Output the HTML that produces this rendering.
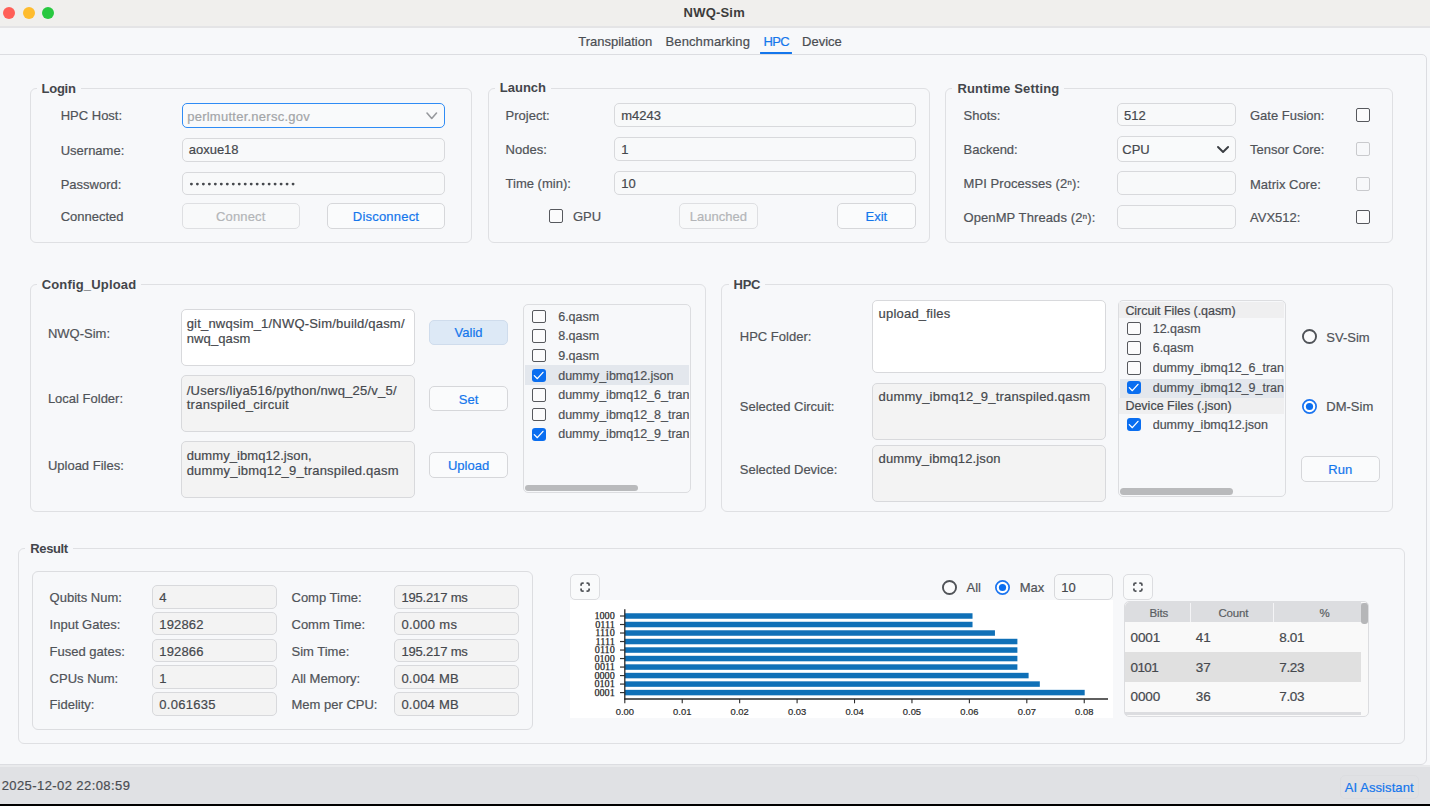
<!DOCTYPE html>
<html><head><meta charset="utf-8"><title>NWQ-Sim</title>
<style>
html,body{margin:0;padding:0;width:1430px;height:806px;overflow:hidden;background:#f7f8fa;font-family:'Liberation Sans', sans-serif;}
body{position:relative;}
</style></head><body>
<div style="position:absolute;left:0px;top:0px;width:1430px;height:26px;background:#f0efed;border-radius:0px;"></div>
<div style="position:absolute;left:0px;top:26px;width:1430px;height:2px;background:#e4e4e6;border-radius:0px;"></div>
<div style="position:absolute;left:0px;top:28px;width:1430px;height:26px;background:#f7f8fa;border-radius:0px;"></div>
<div style="position:absolute;left:2.9000000000000004px;top:6.9px;width:12px;height:12px;border-radius:50%;background:#ff5f57"></div>
<div style="position:absolute;left:22.7px;top:6.9px;width:12px;height:12px;border-radius:50%;background:#febc2e"></div>
<div style="position:absolute;left:42.3px;top:6.9px;width:12px;height:12px;border-radius:50%;background:#28c840"></div>
<div style="position:absolute;left:683.60px;top:5.20px;line-height:15px;font-size:13px;font-weight:bold;color:#3c3c3c;white-space:pre;font-family:'Liberation Sans', sans-serif;letter-spacing:0.194px;">NWQ-Sim</div>
<div style="position:absolute;left:578.20px;top:34.30px;line-height:15px;font-size:13px;font-weight:normal;color:#4a4d52;white-space:pre;font-family:'Liberation Sans', sans-serif;letter-spacing:0.004px;-webkit-text-stroke:0.2px #4a4d52;">Transpilation</div>
<div style="position:absolute;left:665.50px;top:34.30px;line-height:15px;font-size:13px;font-weight:normal;color:#4a4d52;white-space:pre;font-family:'Liberation Sans', sans-serif;letter-spacing:0.117px;-webkit-text-stroke:0.2px #4a4d52;">Benchmarking</div>
<div style="position:absolute;left:763.50px;top:34.30px;line-height:15px;font-size:13px;font-weight:normal;color:#1476ec;white-space:pre;font-family:'Liberation Sans', sans-serif;letter-spacing:-0.649px;-webkit-text-stroke:0.2px #1476ec;">HPC</div>
<div style="position:absolute;left:802.00px;top:34.30px;line-height:15px;font-size:13px;font-weight:normal;color:#4a4d52;white-space:pre;font-family:'Liberation Sans', sans-serif;letter-spacing:0.011px;-webkit-text-stroke:0.2px #4a4d52;">Device</div>
<div style="position:absolute;left:760px;top:52px;width:32.39999999999998px;height:2.299999999999997px;background:#1476ec;border-radius:1.2px;"></div>
<div style="position:absolute;left:-10px;top:54px;width:1437px;height:711px;box-sizing:border-box;border:1px solid #dcdde1;border-radius:0 5px 6px 0;background:#f7f8fa"></div>
<div style="position:absolute;left:760px;top:52px;width:32.39999999999998px;height:2.299999999999997px;background:#1476ec;border-radius:1.2px;"></div>
<div style="position:absolute;left:0px;top:765px;width:1430px;height:2px;background:#e9eaec;border-radius:0px;"></div>
<div style="position:absolute;left:0px;top:767px;width:1430px;height:36.5px;background:#e0e1e4;border-radius:0px;"></div>
<div style="position:absolute;left:0px;top:803.5px;width:1430px;height:2.5px;background:#000;border-radius:0px;"></div>
<div style="position:absolute;left:1.70px;top:777.90px;line-height:15px;font-size:13px;font-weight:normal;color:#4a4d52;white-space:pre;font-family:'Liberation Sans', sans-serif;letter-spacing:0.415px;-webkit-text-stroke:0.2px #4a4d52;">2025-12-02 22:08:59</div>
<div style="position:absolute;left:1340px;top:775px;width:79px;height:24px;box-sizing:border-box;background:transparent;border:1px solid #d9dadd;border-radius:5px;opacity:.6"></div>
<div style="position:absolute;left:1344.70px;top:779.80px;line-height:15px;font-size:13px;font-weight:normal;color:#1476ec;white-space:pre;font-family:'Liberation Sans', sans-serif;letter-spacing:0.089px;-webkit-text-stroke:0.2px #1476ec;">AI Assistant</div>
<div style="position:absolute;left:30px;top:88px;width:442px;height:155px;box-sizing:border-box;background:transparent;border:1px solid #dfe0e3;border-radius:6px;"></div>
<div style="position:absolute;left:41.60px;top:81.00px;line-height:15px;font-size:13px;font-weight:bold;color:#43464b;white-space:pre;font-family:'Liberation Sans', sans-serif;letter-spacing:-0.275px;background:#f7f8fa;padding:0 5px;margin-left:-5px;">Login</div>
<div style="position:absolute;left:60.70px;top:108.40px;line-height:15px;font-size:13px;font-weight:normal;color:#505358;white-space:pre;font-family:'Liberation Sans', sans-serif;letter-spacing:0.000px;-webkit-text-stroke:0.2px #505358;">HPC Host:</div>
<div style="position:absolute;left:60.70px;top:143.00px;line-height:15px;font-size:13px;font-weight:normal;color:#505358;white-space:pre;font-family:'Liberation Sans', sans-serif;letter-spacing:0.000px;-webkit-text-stroke:0.2px #505358;">Username:</div>
<div style="position:absolute;left:60.70px;top:176.70px;line-height:15px;font-size:13px;font-weight:normal;color:#505358;white-space:pre;font-family:'Liberation Sans', sans-serif;letter-spacing:0.000px;-webkit-text-stroke:0.2px #505358;">Password:</div>
<div style="position:absolute;left:60.70px;top:209.00px;line-height:15px;font-size:13px;font-weight:normal;color:#505358;white-space:pre;font-family:'Liberation Sans', sans-serif;letter-spacing:0.000px;-webkit-text-stroke:0.2px #505358;">Connected</div>
<div style="position:absolute;left:181.6px;top:102.5px;width:263.6px;height:25.7px;box-sizing:border-box;background:#f9fafb;border:1.8px solid #2f8cf5;border-radius:5px"></div>
<div style="position:absolute;left:187.20px;top:109.00px;line-height:15px;font-size:13px;font-weight:normal;color:#a3a5a8;white-space:pre;font-family:'Liberation Sans', sans-serif;letter-spacing:0.251px;-webkit-text-stroke:0.2px #a3a5a8;">perlmutter.nersc.gov</div>
<svg style="position:absolute;left:425.4px;top:110.8px" width="13.5" height="9.5"><path d="M2 2 L6.75 7.5 L11.5 2" fill="none" stroke="#97999d" stroke-width="1.6" stroke-linecap="round" stroke-linejoin="round"/></svg>
<div style="position:absolute;left:182px;top:138px;width:263px;height:24px;box-sizing:border-box;background:#f8f9fa;border:1px solid #d8d9dc;border-radius:5px;"></div>
<div style="position:absolute;left:188.70px;top:142.40px;line-height:15px;font-size:13px;font-weight:normal;color:#45484d;white-space:pre;font-family:'Liberation Sans', sans-serif;letter-spacing:0.000px;-webkit-text-stroke:0.2px #45484d;">aoxue18</div>
<div style="position:absolute;left:182px;top:172px;width:263px;height:23px;box-sizing:border-box;background:#f8f9fa;border:1px solid #d8d9dc;border-radius:5px;"></div>
<svg style="position:absolute;left:0;top:0" width="1430" height="806"><circle cx="191.40" cy="184.1" r="1.45" fill="#46494e"/><circle cx="197.38" cy="184.1" r="1.45" fill="#46494e"/><circle cx="203.36" cy="184.1" r="1.45" fill="#46494e"/><circle cx="209.34" cy="184.1" r="1.45" fill="#46494e"/><circle cx="215.32" cy="184.1" r="1.45" fill="#46494e"/><circle cx="221.30" cy="184.1" r="1.45" fill="#46494e"/><circle cx="227.28" cy="184.1" r="1.45" fill="#46494e"/><circle cx="233.26" cy="184.1" r="1.45" fill="#46494e"/><circle cx="239.24" cy="184.1" r="1.45" fill="#46494e"/><circle cx="245.22" cy="184.1" r="1.45" fill="#46494e"/><circle cx="251.20" cy="184.1" r="1.45" fill="#46494e"/><circle cx="257.18" cy="184.1" r="1.45" fill="#46494e"/><circle cx="263.16" cy="184.1" r="1.45" fill="#46494e"/><circle cx="269.14" cy="184.1" r="1.45" fill="#46494e"/><circle cx="275.12" cy="184.1" r="1.45" fill="#46494e"/><circle cx="281.10" cy="184.1" r="1.45" fill="#46494e"/><circle cx="287.08" cy="184.1" r="1.45" fill="#46494e"/><circle cx="293.06" cy="184.1" r="1.45" fill="#46494e"/></svg>
<div style="position:absolute;left:182px;top:203px;width:118px;height:26px;box-sizing:border-box;background:#f8f9fa;border:1px solid #dedfe2;border-radius:5px;"></div>
<div style="position:absolute;left:216.10px;top:209.00px;line-height:15px;font-size:13px;font-weight:normal;color:#b3b5b8;white-space:pre;font-family:'Liberation Sans', sans-serif;letter-spacing:0.126px;-webkit-text-stroke:0.2px #b3b5b8;">Connect</div>
<div style="position:absolute;left:327px;top:203px;width:118px;height:26px;box-sizing:border-box;background:#fafbfc;border:1px solid #d6d7da;border-radius:5px;"></div>
<div style="position:absolute;left:352.80px;top:209.00px;line-height:15px;font-size:13px;font-weight:normal;color:#1476ec;white-space:pre;font-family:'Liberation Sans', sans-serif;letter-spacing:0.209px;-webkit-text-stroke:0.2px #1476ec;">Disconnect</div>
<div style="position:absolute;left:488px;top:88px;width:442px;height:155px;box-sizing:border-box;background:transparent;border:1px solid #dfe0e3;border-radius:6px;"></div>
<div style="position:absolute;left:499.80px;top:80.40px;line-height:15px;font-size:13px;font-weight:bold;color:#43464b;white-space:pre;font-family:'Liberation Sans', sans-serif;letter-spacing:0.000px;background:#f7f8fa;padding:0 5px;margin-left:-5px;">Launch</div>
<div style="position:absolute;left:505.60px;top:108.00px;line-height:15px;font-size:13px;font-weight:normal;color:#505358;white-space:pre;font-family:'Liberation Sans', sans-serif;letter-spacing:0.000px;-webkit-text-stroke:0.2px #505358;">Project:</div>
<div style="position:absolute;left:505.60px;top:142.30px;line-height:15px;font-size:13px;font-weight:normal;color:#505358;white-space:pre;font-family:'Liberation Sans', sans-serif;letter-spacing:0.000px;-webkit-text-stroke:0.2px #505358;">Nodes:</div>
<div style="position:absolute;left:505.60px;top:176.00px;line-height:15px;font-size:13px;font-weight:normal;color:#505358;white-space:pre;font-family:'Liberation Sans', sans-serif;letter-spacing:0.000px;-webkit-text-stroke:0.2px #505358;">Time (min):</div>
<div style="position:absolute;left:614px;top:103px;width:302px;height:24px;box-sizing:border-box;background:#f8f9fa;border:1px solid #d8d9dc;border-radius:5px;"></div>
<div style="position:absolute;left:621.20px;top:107.55px;line-height:15px;font-size:13px;font-weight:normal;color:#45484d;white-space:pre;font-family:'Liberation Sans', sans-serif;letter-spacing:0.000px;-webkit-text-stroke:0.2px #45484d;">m4243</div>
<div style="position:absolute;left:614px;top:137px;width:302px;height:24px;box-sizing:border-box;background:#f8f9fa;border:1px solid #d8d9dc;border-radius:5px;"></div>
<div style="position:absolute;left:621.20px;top:141.50px;line-height:15px;font-size:13px;font-weight:normal;color:#45484d;white-space:pre;font-family:'Liberation Sans', sans-serif;letter-spacing:0.000px;-webkit-text-stroke:0.2px #45484d;">1</div>
<div style="position:absolute;left:614px;top:171px;width:302px;height:24px;box-sizing:border-box;background:#f8f9fa;border:1px solid #d8d9dc;border-radius:5px;"></div>
<div style="position:absolute;left:621.20px;top:175.85px;line-height:15px;font-size:13px;font-weight:normal;color:#45484d;white-space:pre;font-family:'Liberation Sans', sans-serif;letter-spacing:0.000px;-webkit-text-stroke:0.2px #45484d;">10</div>
<div style="position:absolute;left:549px;top:209.3px;width:13.8px;height:13.8px;box-sizing:border-box;border:1.7px solid #56585d;border-radius:2px;background:#fbfbfc"></div>
<div style="position:absolute;left:573.00px;top:209.00px;line-height:15px;font-size:13px;font-weight:normal;color:#505358;white-space:pre;font-family:'Liberation Sans', sans-serif;letter-spacing:0.000px;-webkit-text-stroke:0.2px #505358;">GPU</div>
<div style="position:absolute;left:679px;top:203px;width:79px;height:26px;box-sizing:border-box;background:#f8f9fa;border:1px solid #dedfe2;border-radius:5px;"></div>
<div style="position:absolute;left:689.85px;top:209.05px;line-height:15px;font-size:13px;font-weight:normal;color:#b3b5b8;white-space:pre;font-family:'Liberation Sans', sans-serif;letter-spacing:0.000px;-webkit-text-stroke:0.2px #b3b5b8;">Launched</div>
<div style="position:absolute;left:837px;top:203px;width:79px;height:26px;box-sizing:border-box;background:#fafbfc;border:1px solid #d6d7da;border-radius:5px;"></div>
<div style="position:absolute;left:865.56px;top:209.05px;line-height:15px;font-size:13px;font-weight:normal;color:#1476ec;white-space:pre;font-family:'Liberation Sans', sans-serif;letter-spacing:0.000px;-webkit-text-stroke:0.2px #1476ec;">Exit</div>
<div style="position:absolute;left:945px;top:88px;width:448px;height:155px;box-sizing:border-box;background:transparent;border:1px solid #dfe0e3;border-radius:6px;"></div>
<div style="position:absolute;left:957.40px;top:80.80px;line-height:15px;font-size:13px;font-weight:bold;color:#43464b;white-space:pre;font-family:'Liberation Sans', sans-serif;letter-spacing:0.156px;background:#f7f8fa;padding:0 5px;margin-left:-5px;">Runtime Setting</div>
<div style="position:absolute;left:963.50px;top:107.50px;line-height:15px;font-size:13px;font-weight:normal;color:#505358;white-space:pre;font-family:'Liberation Sans', sans-serif;letter-spacing:0.000px;-webkit-text-stroke:0.2px #505358;">Shots:</div>
<div style="position:absolute;left:963.50px;top:142.30px;line-height:15px;font-size:13px;font-weight:normal;color:#505358;white-space:pre;font-family:'Liberation Sans', sans-serif;letter-spacing:0.000px;-webkit-text-stroke:0.2px #505358;">Backend:</div>
<div style="position:absolute;left:963.50px;top:176.40px;line-height:15px;font-size:13px;font-weight:normal;color:#505358;white-space:pre;font-family:'Liberation Sans', sans-serif;letter-spacing:0.075px;-webkit-text-stroke:0.2px #505358;">MPI Processes (2ⁿ):</div>
<div style="position:absolute;left:963.50px;top:210.20px;line-height:15px;font-size:13px;font-weight:normal;color:#505358;white-space:pre;font-family:'Liberation Sans', sans-serif;letter-spacing:0.097px;-webkit-text-stroke:0.2px #505358;">OpenMP Threads (2ⁿ):</div>
<div style="position:absolute;left:1117px;top:103px;width:119px;height:23px;box-sizing:border-box;background:#f8f9fa;border:1px solid #d8d9dc;border-radius:5px;"></div>
<div style="position:absolute;left:1124.00px;top:107.60px;line-height:15px;font-size:13px;font-weight:normal;color:#45484d;white-space:pre;font-family:'Liberation Sans', sans-serif;letter-spacing:0.000px;-webkit-text-stroke:0.2px #45484d;">512</div>
<div style="position:absolute;left:1117px;top:136px;width:119px;height:26px;box-sizing:border-box;background:#f9fafb;border:1px solid #d8d9dc;border-radius:5px;"></div>
<div style="position:absolute;left:1122.30px;top:141.60px;line-height:15px;font-size:13px;font-weight:normal;color:#45484d;white-space:pre;font-family:'Liberation Sans', sans-serif;letter-spacing:0.000px;-webkit-text-stroke:0.2px #45484d;">CPU</div>
<svg style="position:absolute;left:1215.7px;top:144.7px" width="14.099999999999909" height="9.0"><path d="M2 2 L7.0499999999999545 7.0 L12.099999999999909 2" fill="none" stroke="#3a3d42" stroke-width="1.9" stroke-linecap="round" stroke-linejoin="round"/></svg>
<div style="position:absolute;left:1117px;top:171px;width:119px;height:24px;box-sizing:border-box;background:#f8f9fa;border:1px solid #d8d9dc;border-radius:5px;"></div>
<div style="position:absolute;left:1117px;top:205px;width:119px;height:24px;box-sizing:border-box;background:#f8f9fa;border:1px solid #d8d9dc;border-radius:5px;"></div>
<div style="position:absolute;left:1250.00px;top:107.80px;line-height:15px;font-size:13px;font-weight:normal;color:#505358;white-space:pre;font-family:'Liberation Sans', sans-serif;letter-spacing:0.000px;-webkit-text-stroke:0.2px #505358;">Gate Fusion:</div>
<div style="position:absolute;left:1250.00px;top:142.20px;line-height:15px;font-size:13px;font-weight:normal;color:#505358;white-space:pre;font-family:'Liberation Sans', sans-serif;letter-spacing:0.000px;-webkit-text-stroke:0.2px #505358;">Tensor Core:</div>
<div style="position:absolute;left:1250.00px;top:176.60px;line-height:15px;font-size:13px;font-weight:normal;color:#505358;white-space:pre;font-family:'Liberation Sans', sans-serif;letter-spacing:0.000px;-webkit-text-stroke:0.2px #505358;">Matrix Core:</div>
<div style="position:absolute;left:1250.00px;top:210.20px;line-height:15px;font-size:13px;font-weight:normal;color:#505358;white-space:pre;font-family:'Liberation Sans', sans-serif;letter-spacing:0.000px;-webkit-text-stroke:0.2px #505358;">AVX512:</div>
<div style="position:absolute;left:1356.1px;top:108.1px;width:13.5px;height:13.5px;box-sizing:border-box;border:1.7px solid #56585d;border-radius:2px;background:#fbfbfc"></div>
<div style="position:absolute;left:1356.1px;top:142.1px;width:13.5px;height:13.5px;box-sizing:border-box;border:1.3px solid #c9cacd;border-radius:2px;background:#f7f8fa"></div>
<div style="position:absolute;left:1356.1px;top:177.3px;width:13.5px;height:13.5px;box-sizing:border-box;border:1.3px solid #c9cacd;border-radius:2px;background:#f7f8fa"></div>
<div style="position:absolute;left:1356.1px;top:210.4px;width:13.5px;height:13.5px;box-sizing:border-box;border:1.7px solid #56585d;border-radius:2px;background:#fbfbfc"></div>
<div style="position:absolute;left:30px;top:284px;width:676px;height:228px;box-sizing:border-box;background:transparent;border:1px solid #dfe0e3;border-radius:6px;"></div>
<div style="position:absolute;left:41.70px;top:277.20px;line-height:15px;font-size:13px;font-weight:bold;color:#43464b;white-space:pre;font-family:'Liberation Sans', sans-serif;letter-spacing:0.167px;background:#f7f8fa;padding:0 5px;margin-left:-5px;">Config_Upload</div>
<div style="position:absolute;left:47.90px;top:325.60px;line-height:15px;font-size:13px;font-weight:normal;color:#505358;white-space:pre;font-family:'Liberation Sans', sans-serif;letter-spacing:0.000px;-webkit-text-stroke:0.2px #505358;">NWQ-Sim:</div>
<div style="position:absolute;left:47.90px;top:391.30px;line-height:15px;font-size:13px;font-weight:normal;color:#505358;white-space:pre;font-family:'Liberation Sans', sans-serif;letter-spacing:0.000px;-webkit-text-stroke:0.2px #505358;">Local Folder:</div>
<div style="position:absolute;left:47.90px;top:458.00px;line-height:15px;font-size:13px;font-weight:normal;color:#505358;white-space:pre;font-family:'Liberation Sans', sans-serif;letter-spacing:0.000px;-webkit-text-stroke:0.2px #505358;">Upload Files:</div>
<div style="position:absolute;left:181px;top:309px;width:234px;height:57px;box-sizing:border-box;background:#ffffff;border:1px solid #d8d9dc;border-radius:5px;"></div>
<div style="position:absolute;left:181px;top:375px;width:234px;height:57px;box-sizing:border-box;background:#f3f3f3;border:1px solid #d8d9dc;border-radius:5px;"></div>
<div style="position:absolute;left:181px;top:441px;width:234px;height:57px;box-sizing:border-box;background:#f3f3f3;border:1px solid #d8d9dc;border-radius:5px;"></div>
<div style="position:absolute;left:186.70px;top:316.00px;line-height:15px;font-size:13px;font-weight:normal;color:#45484d;white-space:pre;font-family:'Liberation Sans', sans-serif;letter-spacing:0.198px;-webkit-text-stroke:0.2px #45484d;">git_nwqsim_1/NWQ-Sim/build/qasm/</div>
<div style="position:absolute;left:186.70px;top:331.20px;line-height:15px;font-size:13px;font-weight:normal;color:#45484d;white-space:pre;font-family:'Liberation Sans', sans-serif;letter-spacing:0.117px;-webkit-text-stroke:0.2px #45484d;">nwq_qasm</div>
<div style="position:absolute;left:186.70px;top:382.50px;line-height:15px;font-size:13px;font-weight:normal;color:#45484d;white-space:pre;font-family:'Liberation Sans', sans-serif;letter-spacing:0.238px;-webkit-text-stroke:0.2px #45484d;">/Users/liya516/python/nwq_25/v_5/</div>
<div style="position:absolute;left:186.70px;top:397.00px;line-height:15px;font-size:13px;font-weight:normal;color:#45484d;white-space:pre;font-family:'Liberation Sans', sans-serif;letter-spacing:0.264px;-webkit-text-stroke:0.2px #45484d;">transpiled_circuit</div>
<div style="position:absolute;left:186.70px;top:448.40px;line-height:15px;font-size:13px;font-weight:normal;color:#45484d;white-space:pre;font-family:'Liberation Sans', sans-serif;letter-spacing:0.080px;-webkit-text-stroke:0.2px #45484d;">dummy_ibmq12.json,</div>
<div style="position:absolute;left:186.70px;top:462.70px;line-height:15px;font-size:13px;font-weight:normal;color:#45484d;white-space:pre;font-family:'Liberation Sans', sans-serif;letter-spacing:0.202px;-webkit-text-stroke:0.2px #45484d;">dummy_ibmq12_9_transpiled.qasm</div>
<div style="position:absolute;left:429px;top:320px;width:79px;height:25px;box-sizing:border-box;background:#dde9f6;border:1px solid #cfdcec;border-radius:5px;"></div>
<div style="position:absolute;left:454.58px;top:325.40px;line-height:15px;font-size:13px;font-weight:normal;color:#1476ec;white-space:pre;font-family:'Liberation Sans', sans-serif;letter-spacing:0.000px;-webkit-text-stroke:0.2px #1476ec;">Valid</div>
<div style="position:absolute;left:429px;top:386px;width:79px;height:25px;box-sizing:border-box;background:#fafbfc;border:1px solid #d6d7da;border-radius:5px;"></div>
<div style="position:absolute;left:458.79px;top:391.55px;line-height:15px;font-size:13px;font-weight:normal;color:#1476ec;white-space:pre;font-family:'Liberation Sans', sans-serif;letter-spacing:0.000px;-webkit-text-stroke:0.2px #1476ec;">Set</div>
<div style="position:absolute;left:429px;top:452px;width:79px;height:26px;box-sizing:border-box;background:#fafbfc;border:1px solid #d6d7da;border-radius:5px;"></div>
<div style="position:absolute;left:447.95px;top:457.55px;line-height:15px;font-size:13px;font-weight:normal;color:#1476ec;white-space:pre;font-family:'Liberation Sans', sans-serif;letter-spacing:0.000px;-webkit-text-stroke:0.2px #1476ec;">Upload</div>
<div style="position:absolute;left:523px;top:304px;width:168px;height:189px;box-sizing:border-box;background:#f7f8fa;border:1px solid #dcdde0;border-radius:5px;"></div>
<div style="position:absolute;left:525.2px;top:365.3px;width:163.5999999999999px;height:19.599999999999966px;background:#e3e7ed;border-radius:0px;"></div>
<div style="position:absolute;left:532.2px;top:309.8px;width:13.4px;height:13.4px;box-sizing:border-box;border:1.7px solid #56585d;border-radius:2px;background:#fbfbfc"></div>
<div style="position:absolute;left:558.20px;top:309.57px;line-height:14px;font-size:12.5px;font-weight:normal;color:#4d5055;white-space:pre;font-family:'Liberation Sans', sans-serif;letter-spacing:0.000px;-webkit-text-stroke:0.2px #4d5055;width:131.30px;overflow:hidden;">6.qasm</div>
<div style="position:absolute;left:532.2px;top:329.45px;width:13.4px;height:13.4px;box-sizing:border-box;border:1.7px solid #56585d;border-radius:2px;background:#fbfbfc"></div>
<div style="position:absolute;left:558.20px;top:329.22px;line-height:14px;font-size:12.5px;font-weight:normal;color:#4d5055;white-space:pre;font-family:'Liberation Sans', sans-serif;letter-spacing:0.000px;-webkit-text-stroke:0.2px #4d5055;width:131.30px;overflow:hidden;">8.qasm</div>
<div style="position:absolute;left:532.2px;top:349.1px;width:13.4px;height:13.4px;box-sizing:border-box;border:1.7px solid #56585d;border-radius:2px;background:#fbfbfc"></div>
<div style="position:absolute;left:558.20px;top:348.87px;line-height:14px;font-size:12.5px;font-weight:normal;color:#4d5055;white-space:pre;font-family:'Liberation Sans', sans-serif;letter-spacing:0.000px;-webkit-text-stroke:0.2px #4d5055;width:131.30px;overflow:hidden;">9.qasm</div>
<div style="position:absolute;left:532.2px;top:368.75px;width:13.4px;height:13.4px;box-sizing:border-box;background:#0a6ef0;border-radius:3px;"></div>
<svg style="position:absolute;left:532.2px;top:368.75px" width="13.4" height="13.4" viewBox="0 0 14 14"><path d="M2.4 6.9 L5.6 10.1 L11.5 3.5" fill="none" stroke="#fff" stroke-width="1.4" stroke-linecap="round" stroke-linejoin="round"/></svg>
<div style="position:absolute;left:558.20px;top:368.52px;line-height:14px;font-size:12.5px;font-weight:normal;color:#4d5055;white-space:pre;font-family:'Liberation Sans', sans-serif;letter-spacing:0.000px;-webkit-text-stroke:0.2px #4d5055;width:131.30px;overflow:hidden;">dummy_ibmq12.json</div>
<div style="position:absolute;left:532.2px;top:388.40000000000003px;width:13.4px;height:13.4px;box-sizing:border-box;border:1.7px solid #56585d;border-radius:2px;background:#fbfbfc"></div>
<div style="position:absolute;left:558.20px;top:388.17px;line-height:14px;font-size:12.5px;font-weight:normal;color:#4d5055;white-space:pre;font-family:'Liberation Sans', sans-serif;letter-spacing:0.000px;-webkit-text-stroke:0.2px #4d5055;width:131.30px;overflow:hidden;">dummy_ibmq12_6_tran</div>
<div style="position:absolute;left:532.2px;top:408.05px;width:13.4px;height:13.4px;box-sizing:border-box;border:1.7px solid #56585d;border-radius:2px;background:#fbfbfc"></div>
<div style="position:absolute;left:558.20px;top:407.82px;line-height:14px;font-size:12.5px;font-weight:normal;color:#4d5055;white-space:pre;font-family:'Liberation Sans', sans-serif;letter-spacing:0.000px;-webkit-text-stroke:0.2px #4d5055;width:131.30px;overflow:hidden;">dummy_ibmq12_8_tran</div>
<div style="position:absolute;left:532.2px;top:427.7px;width:13.4px;height:13.4px;box-sizing:border-box;background:#0a6ef0;border-radius:3px;"></div>
<svg style="position:absolute;left:532.2px;top:427.7px" width="13.4" height="13.4" viewBox="0 0 14 14"><path d="M2.4 6.9 L5.6 10.1 L11.5 3.5" fill="none" stroke="#fff" stroke-width="1.4" stroke-linecap="round" stroke-linejoin="round"/></svg>
<div style="position:absolute;left:558.20px;top:427.47px;line-height:14px;font-size:12.5px;font-weight:normal;color:#4d5055;white-space:pre;font-family:'Liberation Sans', sans-serif;letter-spacing:0.000px;-webkit-text-stroke:0.2px #4d5055;width:131.30px;overflow:hidden;">dummy_ibmq12_9_tran</div>
<div style="position:absolute;left:525.2px;top:484.8px;width:112.5px;height:6.199999999999989px;background:#b9babc;border-radius:3px;"></div>
<div style="position:absolute;left:721px;top:284px;width:672px;height:228px;box-sizing:border-box;background:transparent;border:1px solid #dfe0e3;border-radius:6px;"></div>
<div style="position:absolute;left:733.60px;top:277.20px;line-height:15px;font-size:13px;font-weight:bold;color:#43464b;white-space:pre;font-family:'Liberation Sans', sans-serif;letter-spacing:-0.316px;background:#f7f8fa;padding:0 5px;margin-left:-5px;">HPC</div>
<div style="position:absolute;left:739.80px;top:329.30px;line-height:15px;font-size:13px;font-weight:normal;color:#505358;white-space:pre;font-family:'Liberation Sans', sans-serif;letter-spacing:0.000px;-webkit-text-stroke:0.2px #505358;">HPC Folder:</div>
<div style="position:absolute;left:739.80px;top:399.10px;line-height:15px;font-size:13px;font-weight:normal;color:#505358;white-space:pre;font-family:'Liberation Sans', sans-serif;letter-spacing:0.000px;-webkit-text-stroke:0.2px #505358;">Selected Circuit:</div>
<div style="position:absolute;left:739.80px;top:461.70px;line-height:15px;font-size:13px;font-weight:normal;color:#505358;white-space:pre;font-family:'Liberation Sans', sans-serif;letter-spacing:0.000px;-webkit-text-stroke:0.2px #505358;">Selected Device:</div>
<div style="position:absolute;left:872px;top:300px;width:234px;height:73px;box-sizing:border-box;background:#ffffff;border:1px solid #d8d9dc;border-radius:5px;"></div>
<div style="position:absolute;left:872px;top:383px;width:234px;height:57px;box-sizing:border-box;background:#f3f3f3;border:1px solid #d8d9dc;border-radius:5px;"></div>
<div style="position:absolute;left:872px;top:445px;width:234px;height:57px;box-sizing:border-box;background:#f3f3f3;border:1px solid #d8d9dc;border-radius:5px;"></div>
<div style="position:absolute;left:878.60px;top:306.10px;line-height:15px;font-size:13px;font-weight:normal;color:#45484d;white-space:pre;font-family:'Liberation Sans', sans-serif;letter-spacing:0.201px;-webkit-text-stroke:0.2px #45484d;">upload_files</div>
<div style="position:absolute;left:878.60px;top:389.30px;line-height:15px;font-size:13px;font-weight:normal;color:#45484d;white-space:pre;font-family:'Liberation Sans', sans-serif;letter-spacing:0.195px;-webkit-text-stroke:0.2px #45484d;">dummy_ibmq12_9_transpiled.qasm</div>
<div style="position:absolute;left:878.60px;top:451.30px;line-height:15px;font-size:13px;font-weight:normal;color:#45484d;white-space:pre;font-family:'Liberation Sans', sans-serif;letter-spacing:0.121px;-webkit-text-stroke:0.2px #45484d;">dummy_ibmq12.json</div>
<div style="position:absolute;left:1118px;top:300px;width:168px;height:197px;box-sizing:border-box;background:#f7f8fa;border:1px solid #dcdde0;border-radius:5px;"></div>
<div style="position:absolute;left:1119.4px;top:301.6px;width:164.89999999999986px;height:16.299999999999955px;background:#efeff0;border-radius:0px;"></div>
<div style="position:absolute;left:1125.40px;top:304.07px;line-height:14px;font-size:12.5px;font-weight:normal;color:#45484d;white-space:pre;font-family:'Liberation Sans', sans-serif;letter-spacing:-0.044px;-webkit-text-stroke:0.2px #45484d;">Circuit Files (.qasm)</div>
<div style="position:absolute;left:1120.3px;top:378.5px;width:163.29999999999995px;height:19.0px;background:#e3e7ed;border-radius:0px;"></div>
<div style="position:absolute;left:1119.4px;top:397.5px;width:164.89999999999986px;height:16.69999999999999px;background:#efeff0;border-radius:0px;"></div>
<div style="position:absolute;left:1125.40px;top:399.47px;line-height:14px;font-size:12.5px;font-weight:normal;color:#45484d;white-space:pre;font-family:'Liberation Sans', sans-serif;letter-spacing:0.000px;-webkit-text-stroke:0.2px #45484d;">Device Files (.json)</div>
<div style="position:absolute;left:1127.3px;top:321.8px;width:13.4px;height:13.4px;box-sizing:border-box;border:1.7px solid #56585d;border-radius:2px;background:#fbfbfc"></div>
<div style="position:absolute;left:1152.70px;top:321.57px;line-height:14px;font-size:12.5px;font-weight:normal;color:#4d5055;white-space:pre;font-family:'Liberation Sans', sans-serif;letter-spacing:0.000px;-webkit-text-stroke:0.2px #4d5055;width:131.30px;overflow:hidden;">12.qasm</div>
<div style="position:absolute;left:1127.3px;top:341.3px;width:13.4px;height:13.4px;box-sizing:border-box;border:1.7px solid #56585d;border-radius:2px;background:#fbfbfc"></div>
<div style="position:absolute;left:1152.70px;top:341.07px;line-height:14px;font-size:12.5px;font-weight:normal;color:#4d5055;white-space:pre;font-family:'Liberation Sans', sans-serif;letter-spacing:0.000px;-webkit-text-stroke:0.2px #4d5055;width:131.30px;overflow:hidden;">6.qasm</div>
<div style="position:absolute;left:1127.3px;top:361.40000000000003px;width:13.4px;height:13.4px;box-sizing:border-box;border:1.7px solid #56585d;border-radius:2px;background:#fbfbfc"></div>
<div style="position:absolute;left:1152.70px;top:361.17px;line-height:14px;font-size:12.5px;font-weight:normal;color:#4d5055;white-space:pre;font-family:'Liberation Sans', sans-serif;letter-spacing:0.000px;-webkit-text-stroke:0.2px #4d5055;width:131.30px;overflow:hidden;">dummy_ibmq12_6_tran</div>
<div style="position:absolute;left:1127.3px;top:381.0px;width:13.4px;height:13.4px;box-sizing:border-box;background:#0a6ef0;border-radius:3px;"></div>
<svg style="position:absolute;left:1127.3px;top:381.0px" width="13.4" height="13.4" viewBox="0 0 14 14"><path d="M2.4 6.9 L5.6 10.1 L11.5 3.5" fill="none" stroke="#fff" stroke-width="1.4" stroke-linecap="round" stroke-linejoin="round"/></svg>
<div style="position:absolute;left:1152.70px;top:380.77px;line-height:14px;font-size:12.5px;font-weight:normal;color:#4d5055;white-space:pre;font-family:'Liberation Sans', sans-serif;letter-spacing:0.000px;-webkit-text-stroke:0.2px #4d5055;width:131.30px;overflow:hidden;">dummy_ibmq12_9_tran</div>
<div style="position:absolute;left:1127.3px;top:418.1px;width:13.4px;height:13.4px;box-sizing:border-box;background:#0a6ef0;border-radius:3px;"></div>
<svg style="position:absolute;left:1127.3px;top:418.1px" width="13.4" height="13.4" viewBox="0 0 14 14"><path d="M2.4 6.9 L5.6 10.1 L11.5 3.5" fill="none" stroke="#fff" stroke-width="1.4" stroke-linecap="round" stroke-linejoin="round"/></svg>
<div style="position:absolute;left:1152.70px;top:417.87px;line-height:14px;font-size:12.5px;font-weight:normal;color:#4d5055;white-space:pre;font-family:'Liberation Sans', sans-serif;letter-spacing:0.000px;-webkit-text-stroke:0.2px #4d5055;width:131.30px;overflow:hidden;">dummy_ibmq12.json</div>
<div style="position:absolute;left:1120.3px;top:488.2px;width:112.5px;height:6.900000000000034px;background:#b9babc;border-radius:3.5px;"></div>
<svg style="position:absolute;left:1301.1px;top:328.4px" width="17" height="17"><circle cx="8.5" cy="8.5" r="6.55" fill="#fbfbfc" stroke="#505358" stroke-width="1.9"/></svg>
<div style="position:absolute;left:1326.30px;top:329.60px;line-height:15px;font-size:13px;font-weight:normal;color:#505358;white-space:pre;font-family:'Liberation Sans', sans-serif;letter-spacing:0.000px;-webkit-text-stroke:0.2px #505358;">SV-Sim</div>
<svg style="position:absolute;left:1301.1px;top:398.2px" width="17" height="17"><circle cx="8.5" cy="8.5" r="6.65" fill="#fff" stroke="#1a74f0" stroke-width="1.7"/><circle cx="8.5" cy="8.5" r="3.6" fill="#0a6ef0"/></svg>
<div style="position:absolute;left:1326.30px;top:399.40px;line-height:15px;font-size:13px;font-weight:normal;color:#505358;white-space:pre;font-family:'Liberation Sans', sans-serif;letter-spacing:0.000px;-webkit-text-stroke:0.2px #505358;">DM-Sim</div>
<div style="position:absolute;left:1301px;top:456px;width:79px;height:26px;box-sizing:border-box;background:#fafbfc;border:1px solid #d6d7da;border-radius:5px;"></div>
<div style="position:absolute;left:1328.33px;top:461.90px;line-height:15px;font-size:13px;font-weight:normal;color:#1476ec;white-space:pre;font-family:'Liberation Sans', sans-serif;letter-spacing:0.000px;-webkit-text-stroke:0.2px #1476ec;">Run</div>
<div style="position:absolute;left:18px;top:548px;width:1387px;height:196px;box-sizing:border-box;background:transparent;border:1px solid #dfe0e3;border-radius:6px;"></div>
<div style="position:absolute;left:30.30px;top:540.90px;line-height:15px;font-size:13px;font-weight:bold;color:#43464b;white-space:pre;font-family:'Liberation Sans', sans-serif;letter-spacing:-0.372px;background:#f7f8fa;padding:0 5px;margin-left:-5px;">Result</div>
<div style="position:absolute;left:32px;top:571px;width:501px;height:159px;box-sizing:border-box;background:transparent;border:1px solid #dcdde0;border-radius:6px;"></div>
<div style="position:absolute;left:49.60px;top:590.20px;line-height:15px;font-size:13px;font-weight:normal;color:#505358;white-space:pre;font-family:'Liberation Sans', sans-serif;letter-spacing:0.000px;-webkit-text-stroke:0.2px #505358;">Qubits Num:</div>
<div style="position:absolute;left:152px;top:585px;width:125px;height:24px;box-sizing:border-box;background:#f3f3f3;border:1px solid #d8d9dc;border-radius:5px;"></div>
<div style="position:absolute;left:159.30px;top:590.20px;line-height:15px;font-size:13px;font-weight:normal;color:#45484d;white-space:pre;font-family:'Liberation Sans', sans-serif;letter-spacing:0.000px;-webkit-text-stroke:0.2px #45484d;">4</div>
<div style="position:absolute;left:291.50px;top:590.20px;line-height:15px;font-size:13px;font-weight:normal;color:#505358;white-space:pre;font-family:'Liberation Sans', sans-serif;letter-spacing:0.000px;-webkit-text-stroke:0.2px #505358;">Comp Time:</div>
<div style="position:absolute;left:394px;top:585px;width:125px;height:24px;box-sizing:border-box;background:#f3f3f3;border:1px solid #d8d9dc;border-radius:5px;"></div>
<div style="position:absolute;left:401.40px;top:590.20px;line-height:15px;font-size:13px;font-weight:normal;color:#45484d;white-space:pre;font-family:'Liberation Sans', sans-serif;letter-spacing:-0.163px;-webkit-text-stroke:0.2px #45484d;">195.217 ms</div>
<div style="position:absolute;left:49.60px;top:617.00px;line-height:15px;font-size:13px;font-weight:normal;color:#505358;white-space:pre;font-family:'Liberation Sans', sans-serif;letter-spacing:0.000px;-webkit-text-stroke:0.2px #505358;">Input Gates:</div>
<div style="position:absolute;left:152px;top:612px;width:125px;height:23px;box-sizing:border-box;background:#f3f3f3;border:1px solid #d8d9dc;border-radius:5px;"></div>
<div style="position:absolute;left:159.30px;top:617.00px;line-height:15px;font-size:13px;font-weight:normal;color:#45484d;white-space:pre;font-family:'Liberation Sans', sans-serif;letter-spacing:0.153px;-webkit-text-stroke:0.2px #45484d;">192862</div>
<div style="position:absolute;left:291.50px;top:617.00px;line-height:15px;font-size:13px;font-weight:normal;color:#505358;white-space:pre;font-family:'Liberation Sans', sans-serif;letter-spacing:0.000px;-webkit-text-stroke:0.2px #505358;">Comm Time:</div>
<div style="position:absolute;left:394px;top:612px;width:125px;height:23px;box-sizing:border-box;background:#f3f3f3;border:1px solid #d8d9dc;border-radius:5px;"></div>
<div style="position:absolute;left:401.40px;top:617.00px;line-height:15px;font-size:13px;font-weight:normal;color:#45484d;white-space:pre;font-family:'Liberation Sans', sans-serif;letter-spacing:0.291px;-webkit-text-stroke:0.2px #45484d;">0.000 ms</div>
<div style="position:absolute;left:49.60px;top:643.80px;line-height:15px;font-size:13px;font-weight:normal;color:#505358;white-space:pre;font-family:'Liberation Sans', sans-serif;letter-spacing:0.000px;-webkit-text-stroke:0.2px #505358;">Fused gates:</div>
<div style="position:absolute;left:152px;top:639px;width:125px;height:23px;box-sizing:border-box;background:#f3f3f3;border:1px solid #d8d9dc;border-radius:5px;"></div>
<div style="position:absolute;left:159.30px;top:643.80px;line-height:15px;font-size:13px;font-weight:normal;color:#45484d;white-space:pre;font-family:'Liberation Sans', sans-serif;letter-spacing:0.153px;-webkit-text-stroke:0.2px #45484d;">192866</div>
<div style="position:absolute;left:291.50px;top:643.80px;line-height:15px;font-size:13px;font-weight:normal;color:#505358;white-space:pre;font-family:'Liberation Sans', sans-serif;letter-spacing:0.000px;-webkit-text-stroke:0.2px #505358;">Sim Time:</div>
<div style="position:absolute;left:394px;top:639px;width:125px;height:23px;box-sizing:border-box;background:#f3f3f3;border:1px solid #d8d9dc;border-radius:5px;"></div>
<div style="position:absolute;left:401.40px;top:643.80px;line-height:15px;font-size:13px;font-weight:normal;color:#45484d;white-space:pre;font-family:'Liberation Sans', sans-serif;letter-spacing:-0.163px;-webkit-text-stroke:0.2px #45484d;">195.217 ms</div>
<div style="position:absolute;left:49.60px;top:670.60px;line-height:15px;font-size:13px;font-weight:normal;color:#505358;white-space:pre;font-family:'Liberation Sans', sans-serif;letter-spacing:0.000px;-webkit-text-stroke:0.2px #505358;">CPUs Num:</div>
<div style="position:absolute;left:152px;top:665px;width:125px;height:24px;box-sizing:border-box;background:#f3f3f3;border:1px solid #d8d9dc;border-radius:5px;"></div>
<div style="position:absolute;left:159.30px;top:670.60px;line-height:15px;font-size:13px;font-weight:normal;color:#45484d;white-space:pre;font-family:'Liberation Sans', sans-serif;letter-spacing:0.000px;-webkit-text-stroke:0.2px #45484d;">1</div>
<div style="position:absolute;left:291.50px;top:670.60px;line-height:15px;font-size:13px;font-weight:normal;color:#505358;white-space:pre;font-family:'Liberation Sans', sans-serif;letter-spacing:0.000px;-webkit-text-stroke:0.2px #505358;">All Memory:</div>
<div style="position:absolute;left:394px;top:665px;width:125px;height:24px;box-sizing:border-box;background:#f3f3f3;border:1px solid #d8d9dc;border-radius:5px;"></div>
<div style="position:absolute;left:401.40px;top:670.60px;line-height:15px;font-size:13px;font-weight:normal;color:#45484d;white-space:pre;font-family:'Liberation Sans', sans-serif;letter-spacing:0.232px;-webkit-text-stroke:0.2px #45484d;">0.004 MB</div>
<div style="position:absolute;left:49.60px;top:697.40px;line-height:15px;font-size:13px;font-weight:normal;color:#505358;white-space:pre;font-family:'Liberation Sans', sans-serif;letter-spacing:0.000px;-webkit-text-stroke:0.2px #505358;">Fidelity:</div>
<div style="position:absolute;left:152px;top:692px;width:125px;height:24px;box-sizing:border-box;background:#f3f3f3;border:1px solid #d8d9dc;border-radius:5px;"></div>
<div style="position:absolute;left:159.30px;top:697.40px;line-height:15px;font-size:13px;font-weight:normal;color:#45484d;white-space:pre;font-family:'Liberation Sans', sans-serif;letter-spacing:0.285px;-webkit-text-stroke:0.2px #45484d;">0.061635</div>
<div style="position:absolute;left:291.50px;top:697.40px;line-height:15px;font-size:13px;font-weight:normal;color:#505358;white-space:pre;font-family:'Liberation Sans', sans-serif;letter-spacing:0.000px;-webkit-text-stroke:0.2px #505358;">Mem per CPU:</div>
<div style="position:absolute;left:394px;top:692px;width:125px;height:24px;box-sizing:border-box;background:#f3f3f3;border:1px solid #d8d9dc;border-radius:5px;"></div>
<div style="position:absolute;left:401.40px;top:697.40px;line-height:15px;font-size:13px;font-weight:normal;color:#45484d;white-space:pre;font-family:'Liberation Sans', sans-serif;letter-spacing:0.232px;-webkit-text-stroke:0.2px #45484d;">0.004 MB</div>
<div style="position:absolute;left:570px;top:574px;width:30px;height:26px;box-sizing:border-box;background:#f9fafb;border:1px solid #dcdde0;border-radius:5px;"></div>
<svg style="position:absolute;left:0;top:0;overflow:visible" width="1" height="1"><path d="M581.1 585.75 V584.65 Q581.1 583.15 582.6 583.15 H583.7 M586.5 583.15 H587.6 Q589.1 583.15 589.1 584.65 V585.75 M589.1 588.55 V589.65 Q589.1 591.15 587.6 591.15 H586.5 M583.7 591.15 H582.6 Q581.1 591.15 581.1 589.65 V588.55" fill="none" stroke="#505358" stroke-width="1.8"/></svg>
<svg style="position:absolute;left:940.9px;top:578.9px" width="17" height="17"><circle cx="8.5" cy="8.5" r="6.55" fill="#fbfbfc" stroke="#505358" stroke-width="1.9"/></svg>
<div style="position:absolute;left:966.50px;top:580.20px;line-height:15px;font-size:13px;font-weight:normal;color:#505358;white-space:pre;font-family:'Liberation Sans', sans-serif;letter-spacing:0.000px;-webkit-text-stroke:0.2px #505358;">All</div>
<svg style="position:absolute;left:994.1px;top:578.9px" width="17" height="17"><circle cx="8.5" cy="8.5" r="6.65" fill="#fff" stroke="#1a74f0" stroke-width="1.7"/><circle cx="8.5" cy="8.5" r="3.6" fill="#0a6ef0"/></svg>
<div style="position:absolute;left:1019.70px;top:580.20px;line-height:15px;font-size:13px;font-weight:normal;color:#505358;white-space:pre;font-family:'Liberation Sans', sans-serif;letter-spacing:0.000px;-webkit-text-stroke:0.2px #505358;">Max</div>
<div style="position:absolute;left:1054px;top:574px;width:59px;height:26px;box-sizing:border-box;background:#f8f9fa;border:1px solid #d8d9dc;border-radius:5px;"></div>
<div style="position:absolute;left:1061.20px;top:580.20px;line-height:15px;font-size:13px;font-weight:normal;color:#45484d;white-space:pre;font-family:'Liberation Sans', sans-serif;letter-spacing:0.000px;-webkit-text-stroke:0.2px #45484d;">10</div>
<div style="position:absolute;left:1123px;top:574px;width:30px;height:26px;box-sizing:border-box;background:#f9fafb;border:1px solid #dcdde0;border-radius:5px;"></div>
<svg style="position:absolute;left:0;top:0;overflow:visible" width="1" height="1"><path d="M1133.9 585.65 V584.55 Q1133.9 583.05 1135.4 583.05 H1136.5 M1139.3000000000002 583.05 H1140.4 Q1141.9 583.05 1141.9 584.55 V585.65 M1141.9 588.4499999999999 V589.55 Q1141.9 591.05 1140.4 591.05 H1139.3000000000002 M1136.5 591.05 H1135.4 Q1133.9 591.05 1133.9 589.55 V588.4499999999999" fill="none" stroke="#505358" stroke-width="1.8"/></svg>
<div style="position:absolute;left:569.7px;top:600.3px;width:543.3px;height:117.70000000000005px;background:#ffffff;border-radius:0px;"></div>
<svg style="position:absolute;left:0;top:0" width="1430" height="806"><rect x="624.8" y="613.25" width="347.72" height="5.5" fill="#0f70b7"/><line x1="620.0" y1="616.00" x2="624.8" y2="616.00" stroke="#333" stroke-width="1.2"/><text x="614.8" y="619.40" font-family="Liberation Serif" font-size="10.2" text-anchor="end" fill="#2a2a2a" stroke="#2a2a2a" stroke-width="0.25">1000</text><rect x="624.8" y="621.76" width="347.72" height="5.5" fill="#0f70b7"/><line x1="620.0" y1="624.51" x2="624.8" y2="624.51" stroke="#333" stroke-width="1.2"/><text x="614.8" y="627.91" font-family="Liberation Serif" font-size="10.2" text-anchor="end" fill="#2a2a2a" stroke="#2a2a2a" stroke-width="0.25">0111</text><rect x="624.8" y="630.27" width="370.15" height="5.5" fill="#0f70b7"/><line x1="620.0" y1="633.02" x2="624.8" y2="633.02" stroke="#333" stroke-width="1.2"/><text x="614.8" y="636.42" font-family="Liberation Serif" font-size="10.2" text-anchor="end" fill="#2a2a2a" stroke="#2a2a2a" stroke-width="0.25">1110</text><rect x="624.8" y="638.78" width="392.59" height="5.5" fill="#0f70b7"/><line x1="620.0" y1="641.53" x2="624.8" y2="641.53" stroke="#333" stroke-width="1.2"/><text x="614.8" y="644.93" font-family="Liberation Serif" font-size="10.2" text-anchor="end" fill="#2a2a2a" stroke="#2a2a2a" stroke-width="0.25">1111</text><rect x="624.8" y="647.29" width="392.59" height="5.5" fill="#0f70b7"/><line x1="620.0" y1="650.04" x2="624.8" y2="650.04" stroke="#333" stroke-width="1.2"/><text x="614.8" y="653.44" font-family="Liberation Serif" font-size="10.2" text-anchor="end" fill="#2a2a2a" stroke="#2a2a2a" stroke-width="0.25">0110</text><rect x="624.8" y="655.80" width="392.59" height="5.5" fill="#0f70b7"/><line x1="620.0" y1="658.55" x2="624.8" y2="658.55" stroke="#333" stroke-width="1.2"/><text x="614.8" y="661.95" font-family="Liberation Serif" font-size="10.2" text-anchor="end" fill="#2a2a2a" stroke="#2a2a2a" stroke-width="0.25">0100</text><rect x="624.8" y="664.31" width="392.59" height="5.5" fill="#0f70b7"/><line x1="620.0" y1="667.06" x2="624.8" y2="667.06" stroke="#333" stroke-width="1.2"/><text x="614.8" y="670.46" font-family="Liberation Serif" font-size="10.2" text-anchor="end" fill="#2a2a2a" stroke="#2a2a2a" stroke-width="0.25">0011</text><rect x="624.8" y="672.82" width="403.80" height="5.5" fill="#0f70b7"/><line x1="620.0" y1="675.57" x2="624.8" y2="675.57" stroke="#333" stroke-width="1.2"/><text x="614.8" y="678.97" font-family="Liberation Serif" font-size="10.2" text-anchor="end" fill="#2a2a2a" stroke="#2a2a2a" stroke-width="0.25">0000</text><rect x="624.8" y="681.33" width="415.02" height="5.5" fill="#0f70b7"/><line x1="620.0" y1="684.08" x2="624.8" y2="684.08" stroke="#333" stroke-width="1.2"/><text x="614.8" y="687.48" font-family="Liberation Serif" font-size="10.2" text-anchor="end" fill="#2a2a2a" stroke="#2a2a2a" stroke-width="0.25">0101</text><rect x="624.8" y="689.84" width="459.89" height="5.5" fill="#0f70b7"/><line x1="620.0" y1="692.59" x2="624.8" y2="692.59" stroke="#333" stroke-width="1.2"/><text x="614.8" y="695.99" font-family="Liberation Serif" font-size="10.2" text-anchor="end" fill="#2a2a2a" stroke="#2a2a2a" stroke-width="0.25">0001</text><line x1="624.8" y1="609.2" x2="624.8" y2="699.5" stroke="#2a2a2a" stroke-width="1.3"/><line x1="624.1999999999999" y1="699" x2="1108" y2="699" stroke="#2a2a2a" stroke-width="1.3"/><line x1="624.80" y1="699" x2="624.80" y2="703.3" stroke="#2a2a2a" stroke-width="1.1"/><text x="624.80" y="715.3" font-family="Liberation Sans" font-size="9.4" text-anchor="middle" fill="#2a2a2a" stroke="#2a2a2a" stroke-width="0.2">0.00</text><line x1="682.23" y1="699" x2="682.23" y2="703.3" stroke="#2a2a2a" stroke-width="1.1"/><text x="682.23" y="715.3" font-family="Liberation Sans" font-size="9.4" text-anchor="middle" fill="#2a2a2a" stroke="#2a2a2a" stroke-width="0.2">0.01</text><line x1="739.66" y1="699" x2="739.66" y2="703.3" stroke="#2a2a2a" stroke-width="1.1"/><text x="739.66" y="715.3" font-family="Liberation Sans" font-size="9.4" text-anchor="middle" fill="#2a2a2a" stroke="#2a2a2a" stroke-width="0.2">0.02</text><line x1="797.09" y1="699" x2="797.09" y2="703.3" stroke="#2a2a2a" stroke-width="1.1"/><text x="797.09" y="715.3" font-family="Liberation Sans" font-size="9.4" text-anchor="middle" fill="#2a2a2a" stroke="#2a2a2a" stroke-width="0.2">0.03</text><line x1="854.52" y1="699" x2="854.52" y2="703.3" stroke="#2a2a2a" stroke-width="1.1"/><text x="854.52" y="715.3" font-family="Liberation Sans" font-size="9.4" text-anchor="middle" fill="#2a2a2a" stroke="#2a2a2a" stroke-width="0.2">0.04</text><line x1="911.95" y1="699" x2="911.95" y2="703.3" stroke="#2a2a2a" stroke-width="1.1"/><text x="911.95" y="715.3" font-family="Liberation Sans" font-size="9.4" text-anchor="middle" fill="#2a2a2a" stroke="#2a2a2a" stroke-width="0.2">0.05</text><line x1="969.38" y1="699" x2="969.38" y2="703.3" stroke="#2a2a2a" stroke-width="1.1"/><text x="969.38" y="715.3" font-family="Liberation Sans" font-size="9.4" text-anchor="middle" fill="#2a2a2a" stroke="#2a2a2a" stroke-width="0.2">0.06</text><line x1="1026.81" y1="699" x2="1026.81" y2="703.3" stroke="#2a2a2a" stroke-width="1.1"/><text x="1026.81" y="715.3" font-family="Liberation Sans" font-size="9.4" text-anchor="middle" fill="#2a2a2a" stroke="#2a2a2a" stroke-width="0.2">0.07</text><line x1="1084.24" y1="699" x2="1084.24" y2="703.3" stroke="#2a2a2a" stroke-width="1.1"/><text x="1084.24" y="715.3" font-family="Liberation Sans" font-size="9.4" text-anchor="middle" fill="#2a2a2a" stroke="#2a2a2a" stroke-width="0.2">0.08</text></svg>
<div style="position:absolute;left:1124px;top:601px;width:245px;height:116px;box-sizing:border-box;background:#f9f9f9;border:1px solid #dcdde0;border-radius:5px;overflow:hidden"></div>
<div style="position:absolute;left:1124.6px;top:601.9px;width:236.80000000000018px;height:20.600000000000023px;background:#dcdde0;border-radius:0px;border-top-left-radius:5px"></div>
<div style="position:absolute;left:1189.6px;top:602.7px;width:1.0px;height:19.799999999999955px;background:#f4f4f6;border-radius:0px;"></div>
<div style="position:absolute;left:1273.2px;top:602.7px;width:1.0px;height:19.799999999999955px;background:#f4f4f6;border-radius:0px;"></div>
<div style="position:absolute;left:1149.55px;top:606.52px;line-height:13px;font-size:11.5px;font-weight:normal;color:#5a5d62;white-space:pre;font-family:'Liberation Sans', sans-serif;letter-spacing:-0.168px;-webkit-text-stroke:0.2px #5a5d62;">Bits</div>
<div style="position:absolute;left:1218.40px;top:606.52px;line-height:13px;font-size:11.5px;font-weight:normal;color:#5a5d62;white-space:pre;font-family:'Liberation Sans', sans-serif;letter-spacing:-0.137px;-webkit-text-stroke:0.2px #5a5d62;">Count</div>
<div style="position:absolute;left:1319.49px;top:606.52px;line-height:13px;font-size:11.5px;font-weight:normal;color:#5a5d62;white-space:pre;font-family:'Liberation Sans', sans-serif;letter-spacing:0.000px;-webkit-text-stroke:0.2px #5a5d62;">%</div>
<div style="position:absolute;left:1361.4px;top:602.7px;width:6.0px;height:19.799999999999955px;background:#dcdde0;border-radius:0px;"></div>
<div style="position:absolute;left:1361.4px;top:603.3px;width:6.599999999999909px;height:20.300000000000068px;background:#b5b6b8;border-radius:3px;"></div>
<div style="position:absolute;left:1125.4px;top:652.3px;width:235.39999999999986px;height:29.700000000000045px;background:#e0e0e0;border-radius:0px;"></div>
<div style="position:absolute;left:1125.4px;top:711.8px;width:235.39999999999986px;height:3.300000000000068px;background:#dcdde0;border-radius:0px;"></div>
<div style="position:absolute;left:1130.50px;top:629.92px;line-height:16px;font-size:13.5px;font-weight:normal;color:#45484d;white-space:pre;font-family:'Liberation Sans', sans-serif;letter-spacing:-0.133px;-webkit-text-stroke:0.2px #45484d;">0001</div>
<div style="position:absolute;left:1195.80px;top:629.92px;line-height:16px;font-size:13.5px;font-weight:normal;color:#45484d;white-space:pre;font-family:'Liberation Sans', sans-serif;letter-spacing:0.000px;-webkit-text-stroke:0.2px #45484d;">41</div>
<div style="position:absolute;left:1279.30px;top:629.92px;line-height:16px;font-size:13.5px;font-weight:normal;color:#45484d;white-space:pre;font-family:'Liberation Sans', sans-serif;letter-spacing:-0.394px;-webkit-text-stroke:0.2px #45484d;">8.01</div>
<div style="position:absolute;left:1130.50px;top:659.52px;line-height:16px;font-size:13.5px;font-weight:normal;color:#45484d;white-space:pre;font-family:'Liberation Sans', sans-serif;letter-spacing:-0.633px;-webkit-text-stroke:0.2px #45484d;">0101</div>
<div style="position:absolute;left:1195.80px;top:659.52px;line-height:16px;font-size:13.5px;font-weight:normal;color:#45484d;white-space:pre;font-family:'Liberation Sans', sans-serif;letter-spacing:0.000px;-webkit-text-stroke:0.2px #45484d;">37</div>
<div style="position:absolute;left:1279.30px;top:659.52px;line-height:16px;font-size:13.5px;font-weight:normal;color:#45484d;white-space:pre;font-family:'Liberation Sans', sans-serif;letter-spacing:-0.394px;-webkit-text-stroke:0.2px #45484d;">7.23</div>
<div style="position:absolute;left:1130.50px;top:689.12px;line-height:16px;font-size:13.5px;font-weight:normal;color:#45484d;white-space:pre;font-family:'Liberation Sans', sans-serif;letter-spacing:-0.133px;-webkit-text-stroke:0.2px #45484d;">0000</div>
<div style="position:absolute;left:1195.80px;top:689.12px;line-height:16px;font-size:13.5px;font-weight:normal;color:#45484d;white-space:pre;font-family:'Liberation Sans', sans-serif;letter-spacing:0.000px;-webkit-text-stroke:0.2px #45484d;">36</div>
<div style="position:absolute;left:1279.30px;top:689.12px;line-height:16px;font-size:13.5px;font-weight:normal;color:#45484d;white-space:pre;font-family:'Liberation Sans', sans-serif;letter-spacing:-0.394px;-webkit-text-stroke:0.2px #45484d;">7.03</div>
</body></html>
